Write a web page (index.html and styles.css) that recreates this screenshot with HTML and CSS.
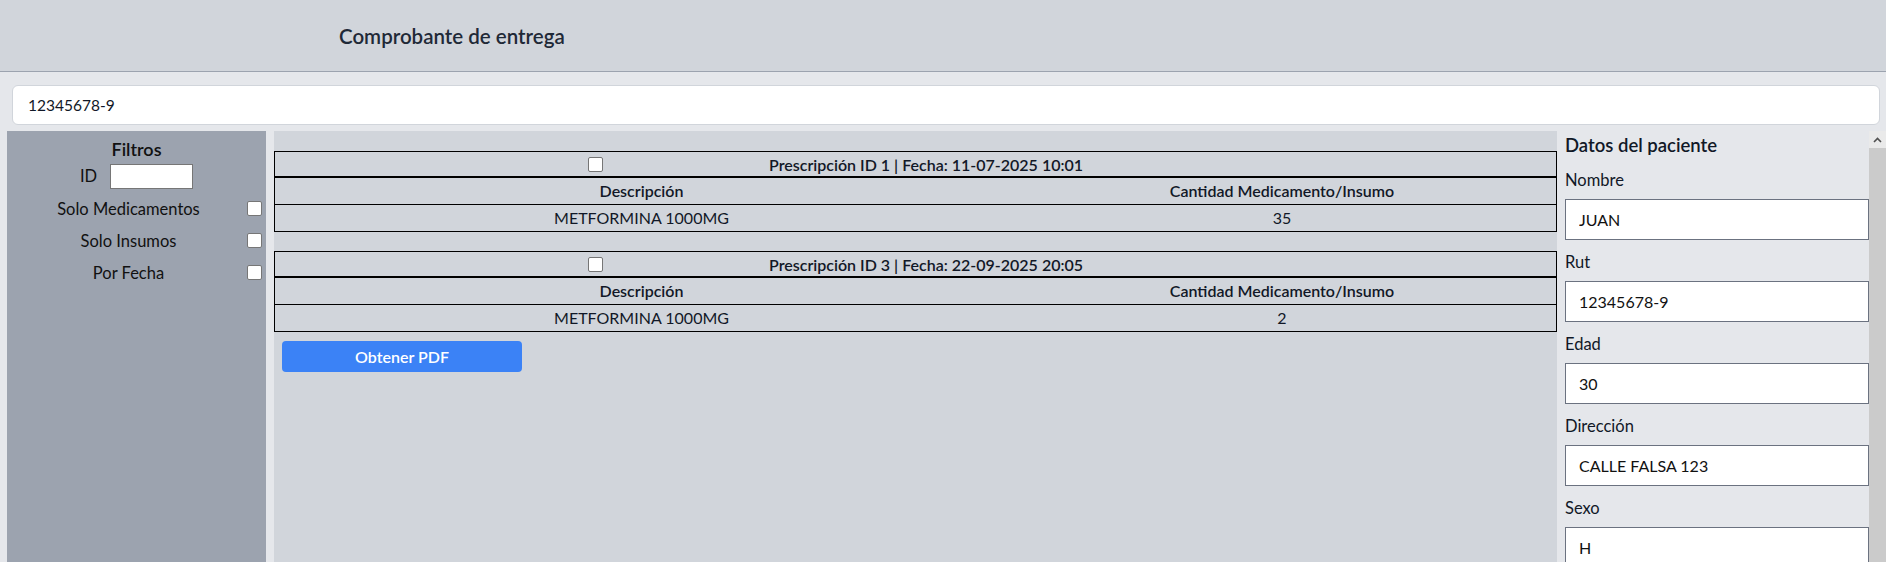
FILE: index.html
```html
<!DOCTYPE html>
<html lang="es">
<head>
<meta charset="utf-8">
<title>Comprobante de entrega</title>
<link rel="stylesheet" href="styles.css">
</head>
<body>
<header class="topbar">
  <h1 class="title">Comprobante de entrega</h1>
</header>
<div class="search-wrap">
  <input class="search" type="text" value="12345678-9">
</div>
<div class="content">
  <aside class="filters">
    <h2 class="filters-title">Filtros</h2>
    <div class="id-row">
      <span class="id-label">ID</span>
      <input class="id-input" type="text">
    </div>
    <label class="check-row"><span class="check-label">Solo Medicamentos</span><input class="box" type="checkbox"></label>
    <label class="check-row"><span class="check-label">Solo Insumos</span><input class="box" type="checkbox"></label>
    <label class="check-row"><span class="check-label">Por Fecha</span><input class="box" type="checkbox"></label>
  </aside>
  <main class="main">
    <section class="presc">
      <div class="presc-head">
        <input class="box head-box" type="checkbox">
        <span class="presc-title">Prescripción ID 1 | Fecha: 11-07-2025 10:01</span>
      </div>
      <table class="items">
        <colgroup><col class="col-desc"><col></colgroup>
        <tr><th>Descripción</th><th>Cantidad Medicamento/Insumo</th></tr>
        <tr><td>METFORMINA 1000MG</td><td>35</td></tr>
      </table>
    </section>
    <section class="presc">
      <div class="presc-head">
        <input class="box head-box" type="checkbox">
        <span class="presc-title">Prescripción ID 3 | Fecha: 22-09-2025 20:05</span>
      </div>
      <table class="items">
        <colgroup><col class="col-desc"><col></colgroup>
        <tr><th>Descripción</th><th>Cantidad Medicamento/Insumo</th></tr>
        <tr><td>METFORMINA 1000MG</td><td>2</td></tr>
      </table>
    </section>
    <button class="pdf-btn" type="button">Obtener PDF</button>
  </main>
  <aside class="patient">
    <h2 class="patient-title">Datos del paciente</h2>
    <div class="field"><label class="field-label">Nombre</label><input class="field-input" type="text" value="JUAN"></div>
    <div class="field"><label class="field-label">Rut</label><input class="field-input" type="text" value="12345678-9"></div>
    <div class="field"><label class="field-label">Edad</label><input class="field-input" type="text" value="30"></div>
    <div class="field"><label class="field-label">Dirección</label><input class="field-input" type="text" value="CALLE FALSA 123"></div>
    <div class="field"><label class="field-label">Sexo</label><input class="field-input" type="text" value="H"></div>
  </aside>
  <div class="scrollbar">
    <div class="scroll-btn">
      <svg width="9" height="6" viewBox="0 0 9 6"><path d="M1 5 L4.5 1.5 L8 5" fill="none" stroke="#505050" stroke-width="1.6"/></svg>
    </div>
    <div class="scroll-thumb"></div>
  </div>
</div>
</body>
</html>
```

FILE: styles.css
```css
html, body {
  margin: 0;
  padding: 0;
  height: 100%;
  overflow: hidden;
}
body {
  background: #e5e7eb;
  font-family: Lato, "Noto Sans", sans-serif;
  color: #111827;
}
.topbar {
  height: 71px;
  background: #d1d5db;
  border-bottom: 1px solid #9ca3af;
  display: flex;
  align-items: center;
  padding-left: 339px;
}
.title {
  margin: 0;
  font-size: 20.5px;
  font-weight: 600;
  color: #1f2937;
}
.search-wrap {
  padding: 13px 6px 6px 12px;
}
.search {
  box-sizing: border-box;
  width: 100%;
  height: 40px;
  border: 1px solid #d1d5db;
  border-radius: 6px;
  background: #fff;
  padding: 0 15px;
  font: inherit;
  font-size: 15.5px;
  color: #111827;
  outline: none;
}
.content {
  display: flex;
  height: calc(100vh - 131px);
  padding-left: 7px;
}
.filters {
  width: 259px;
  flex: none;
  background: #9ca3af;
  padding-top: 8px;
  box-sizing: border-box;
}
.filters-title {
  margin: 0 0 1px;
  font-size: 18px;
  line-height: 20px;
  font-weight: 600;
  text-align: center;
  color: #111;
}
.id-row {
  height: 32px;
  display: flex;
  align-items: center;
  justify-content: center;
  gap: 13px;
}
.id-label, .check-label {
  font-size: 16.5px;
  color: #111;
}
.id-input {
  box-sizing: border-box;
  width: 83px;
  height: 25px;
  border: 1px solid #767676;
  background: #fff;
  margin: 0;
}
.check-row {
  height: 32px;
  display: flex;
  align-items: center;
  padding-top: 1px;
  box-sizing: border-box;
}
.check-label {
  flex: 1;
  text-align: center;
  padding-left: 3px;
}
.box {
  appearance: none;
  -webkit-appearance: none;
  box-sizing: border-box;
  width: 15px;
  height: 15px;
  margin: 0 4px 0 0;
  border: 1px solid #767676;
  border-radius: 2px;
  background: #fff;
  flex: none;
}
.main {
  margin-left: 8px;
  width: 1283px;
  flex: none;
  background: #d1d5db;
  padding-top: 20px;
  box-sizing: border-box;
}
.presc {
  border: 1px solid #000;
  margin-bottom: 19px;
}
.presc + .presc {
  margin-bottom: 9px;
}
.presc-head {
  height: 24px;
  display: flex;
  align-items: center;
  border-bottom: 2px solid #000;
}
.head-box {
  margin: 0 0 0 313px;
}
.presc-title {
  margin-left: 166px;
  font-size: 16px;
  font-weight: 600;
}
.items {
  width: 100%;
  border-collapse: collapse;
  table-layout: fixed;
}
.col-desc {
  width: 733px;
}
.items th, .items td {
  height: 26px;
  padding: 0;
  text-align: center;
  font-size: 16px;
  line-height: 18px;
}
.items th {
  font-weight: 600;
}
.items tr + tr td {
  border-top: 1px solid #000;
}
.pdf-btn {
  margin-left: 8px;
  width: 240px;
  height: 31px;
  border: 0;
  border-radius: 4px;
  background: #3b82f6;
  color: #fff;
  font: inherit;
  font-size: 16px;
  font-weight: 600;
}
.patient {
  width: 312px;
  flex: none;
  padding: 4px 0 0 8px;
  box-sizing: border-box;
  overflow: hidden;
}
.patient-title {
  margin: 0 0 3px;
  font-size: 18.5px;
  line-height: 20px;
  font-weight: 600;
}
.field {
  display: flex;
  flex-direction: column;
}
.field-label {
  margin: 12px 0 9px;
  font-size: 16.5px;
  line-height: 20px;
}
.field-input {
  box-sizing: border-box;
  width: 100%;
  height: 41px;
  margin: 0;
  border: 1px solid #6b7280;
  background: #fff;
  padding: 0 13px;
  font: inherit;
  font-size: 16px;
  color: #111;
}
.scrollbar {
  width: 17px;
  flex: none;
  display: flex;
  flex-direction: column;
}
.scroll-btn {
  height: 17px;
  background: #eaeaea;
  display: flex;
  align-items: center;
  justify-content: center;
}
.scroll-thumb {
  flex: 1;
  background: #cbcbcb;
}
```
